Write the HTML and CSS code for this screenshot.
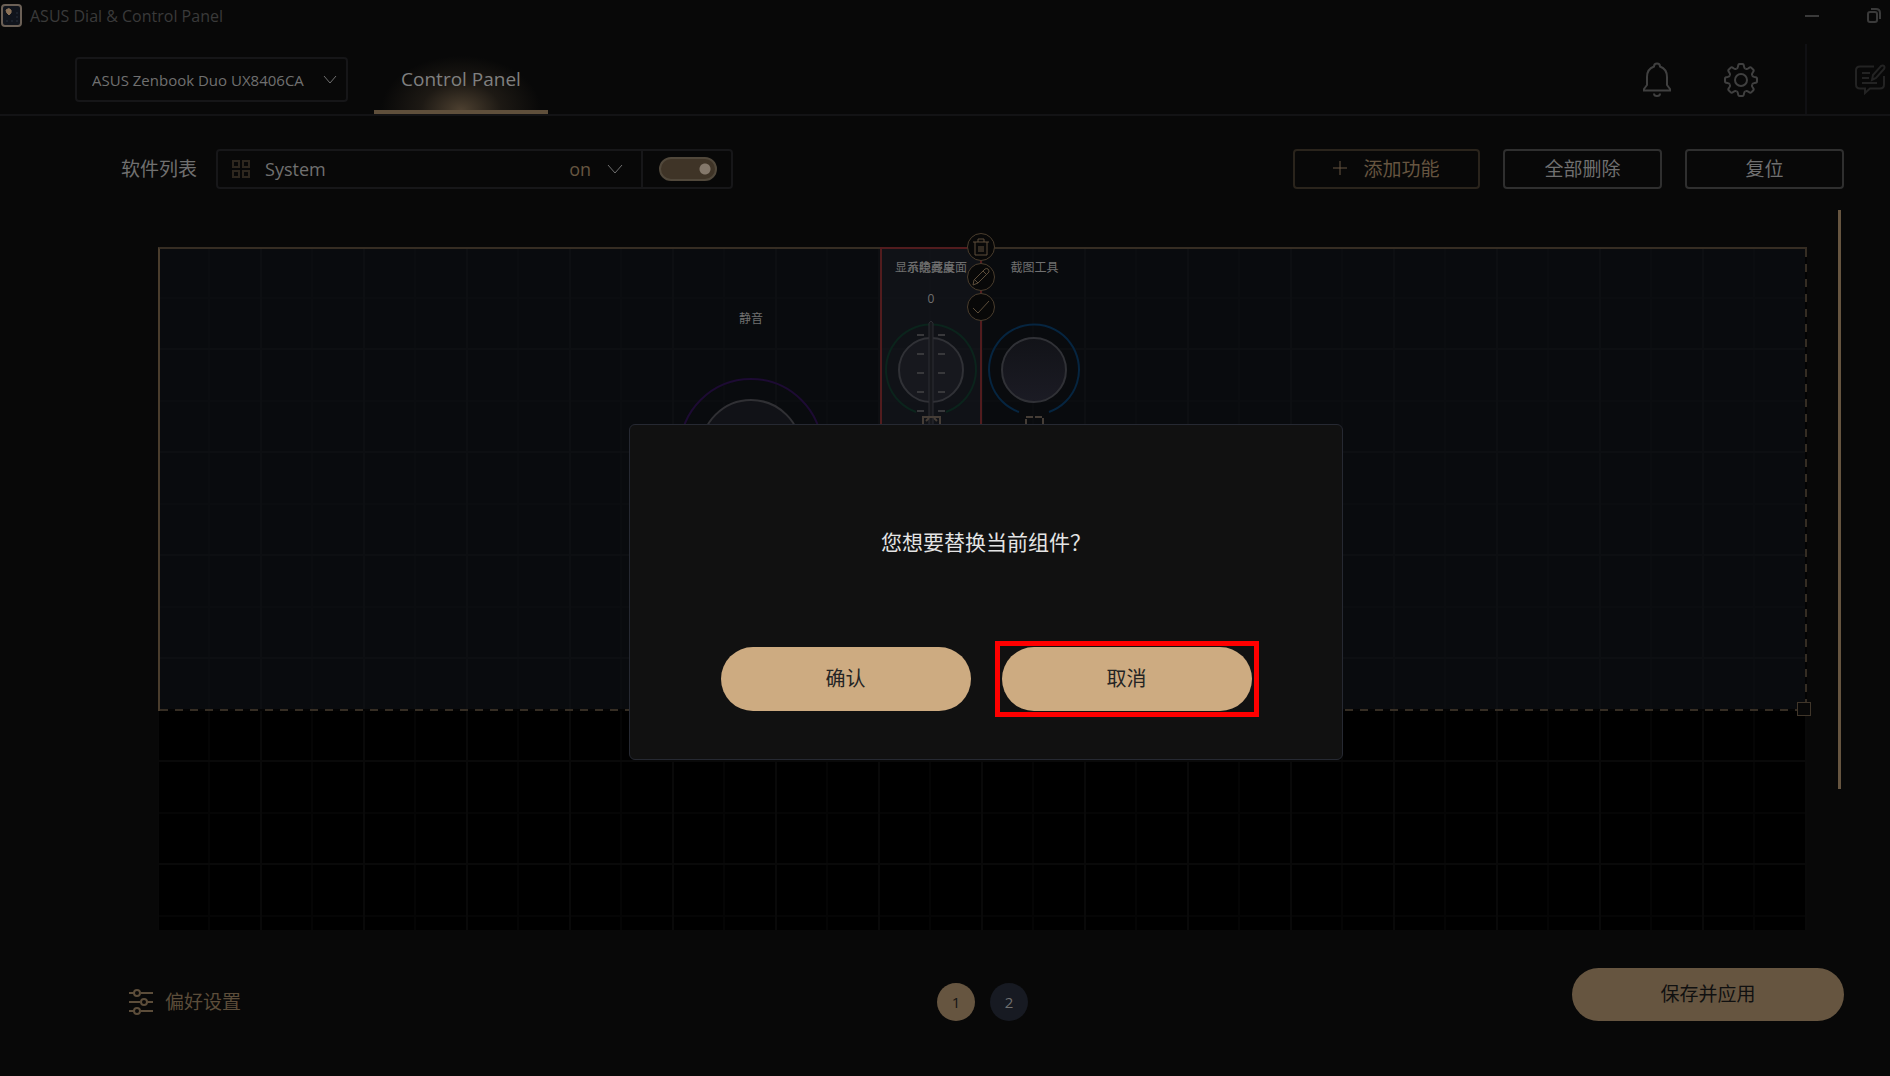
FILE: index.html
```html
<!DOCTYPE html>
<html lang="zh-CN">
<head>
  <meta charset="UTF-8">
  <meta name="viewport" content="width=device-width, initial-scale=1.0">
  <title>ASUS Dial &amp; Control Panel</title>
  <link rel="stylesheet" href="styles.css">
</head>
<body>
  <div class="app">

    <div class="titlebar">
      <svg class="app-icon" width="22" height="24" viewBox="0 0 22 24">
        <rect x="1" y="1" width="19" height="21" rx="3" fill="#10141c" stroke="#6b6056" stroke-width="2"/>
        <path d="M5 6q3-3 5 0 1 3-2 5-3-2-3-5z" fill="#8a7157" stroke="#8a7157"/>
        <path d="M5 17h2M10 17h2M15 17h2M15 9h2M15 13h2" stroke="#1b212b" stroke-width="2"/>
      </svg>
      <span class="app-name">ASUS Dial &amp; Control Panel</span>
      <button class="win-btn" aria-label="Minimize">
        <svg width="16" height="16" viewBox="0 0 16 16"><path d="M1 8h14"/></svg>
      </button>
      <button class="win-btn" aria-label="Restore">
        <svg width="16" height="16" viewBox="0 0 16 16"><rect x="2" y="4" width="9" height="10" rx="2"/><path d="M5 1h5q4 0 4 4v6"/></svg>
      </button>
    </div>

    <header class="header">
      <label class="device">
        <select aria-label="Device">
          <option>ASUS Zenbook Duo UX8406CA</option>
        </select>
        <svg width="14" height="10" viewBox="0 0 14 10"><path d="M1 1l6 7 6-7"/></svg>
      </label>
      <a class="tab" href="#">Control Panel</a>
      <nav class="header-icons">
        <button class="icon-btn" aria-label="Notifications">
          <svg width="36" height="36" viewBox="0 0 36 36">
            <path d="M8 23V15q0-8 7-10.500q0-3 3-3t3 3q7 2.500 7 10.500v8l3 4v1.500H5V27z"/>
            <path d="M15 31.500q0 2.500 3 2.500t3-2.500"/>
          </svg>
        </button>
        <button class="icon-btn" aria-label="Settings">
          <svg width="36" height="36" viewBox="-18 -18 36 36">
            <defs><path id="tooth" d="M-4.600-11.100Q-3.200-11.700-3-13.500Q-2.800-16-1.500-16H1.500Q2.800-16 3-13.500Q3.200-11.700 4.600-11.100"/></defs>
            <use href="#tooth"/>
            <use href="#tooth" transform="rotate(45)"/>
            <use href="#tooth" transform="rotate(90)"/>
            <use href="#tooth" transform="rotate(135)"/>
            <use href="#tooth" transform="rotate(180)"/>
            <use href="#tooth" transform="rotate(225)"/>
            <use href="#tooth" transform="rotate(270)"/>
            <use href="#tooth" transform="rotate(315)"/>
            <circle r="6"/>
          </svg>
        </button>
      </nav>
      <div class="feedback">
        <button class="icon-btn dim" aria-label="Feedback">
          <svg width="32" height="36" viewBox="0 -2 32 36">
            <path d="M20 3.500H6q-4 0-4 4v14q0 4 4 4h5v4.500l5-4.500h10q4 0 4-4V13"/>
            <path d="M8 10h8M8 15h7M8 20h15M18 17l1-5 8-9q2-1 3 0t0 3l-8 9z"/>
          </svg>
        </button>
      </div>
    </header>

    <div class="toolbar">
      <label class="list-label" for="software">软件列表</label>
      <div class="software">
        <svg class="grid-icon" width="20" height="20" viewBox="0 0 20 20"><path d="M2 2h6v6H2zM12 2h6v6h-6zM2 12h6v6H2zM12 12h6v6h-6z"/></svg>
        <select id="software">
          <option>System</option>
        </select>
        <span class="state">on</span>
        <svg class="chevron" width="16" height="10" viewBox="0 0 16 10"><path d="M1 1l7 8 7-8"/></svg>
      </div>
      <div class="toggle-box">
        <input class="toggle" type="checkbox" aria-label="on" checked>
      </div>
      <div class="actions">
        <button class="btn gold">
          <svg width="14" height="14" viewBox="0 0 14 14"><path d="M7 0v14M0 7h14"/></svg>
          添加功能
        </button>
        <button class="btn">全部删除</button>
        <button class="btn">复位</button>
      </div>
    </div>

    <main class="main">
      <div class="canvas">
        <div class="zone">
          <span class="edge-right"></span>
          <span class="edge-bottom"></span>
          <span class="handle"></span>
        </div>

        <section class="widget mute">
          <span class="label">静音</span>
          <svg width="206" height="150" viewBox="0 0 206 150">
            <circle cx="103" cy="75" r="71" fill="none" stroke="#1d0b33" stroke-width="2"/>
            <circle cx="103" cy="75" r="50" fill="#111217" stroke="#303034" stroke-width="2"/>
          </svg>
        </section>

        <section class="widget selected">
          <span class="label">显示隐藏桌面</span>
          <span class="label over">系统亮度</span>
          <span class="value">0</span>
          <svg width="100" height="118" viewBox="0 0 100 118">
            <path d="M35 95A45 45 0 1 1 65 95" fill="none" stroke="#0b241c" stroke-width="2"/>
            <circle cx="50" cy="53" r="32" fill="#17181e" stroke="#303136" stroke-width="2"/>
            <path d="M36 18h7M57 18h7M36 37h7M57 37h7M36 56h7M57 56h7M36 75h7M57 75h7M36 94h7M57 94h7" stroke="#38383b" stroke-width="2"/>
            <path d="M48 118V6l2-2 2 2v112" fill="#17181c" stroke="#2c2d32"/>
            <path d="M42 118v-18h17v18M45 104l3-3M56 104l-3-3" fill="none" stroke="#453d36" stroke-width="2"/>
          </svg>
        </section>

        <section class="widget snip">
          <span class="label">截图工具</span>
          <svg width="103" height="118" viewBox="0 0 103 118">
            <defs>
              <linearGradient id="knob" x1="0" y1="0" x2="0" y2="1">
                <stop offset="0" stop-color="#121318"/>
                <stop offset="1" stop-color="#1b1b24"/>
              </linearGradient>
            </defs>
            <path d="M36 95A45 45 0 1 1 66 95" fill="none" stroke="#062540" stroke-width="2"/>
            <circle cx="51" cy="53" r="32" fill="url(#knob)" stroke="#303136" stroke-width="2"/>
            <path d="M43 118v-18h17v18" fill="none" stroke="#453d36" stroke-width="2" stroke-dasharray="7 2"/>
          </svg>
        </section>

        <div class="widget-tools">
          <button aria-label="删除">
            <svg width="20" height="20" viewBox="0 0 20 20"><path d="M2 5h16M7 5V2h6v3M4 5v13h12V5M8 9v6M10 9v6M12 9v6"/></svg>
          </button>
          <button aria-label="编辑">
            <svg width="20" height="20" viewBox="0 0 20 20"><path d="M2 18l1-5L14 2q2-1 3 0t1 3L7 16zM4 13l3 3M12 4l4 4"/></svg>
          </button>
          <button aria-label="完成">
            <svg width="20" height="20" viewBox="0 0 20 20"><path d="M2 11l5 5L18 4"/></svg>
          </button>
        </div>
      </div>
      <div class="scrollbar"></div>
    </main>

    <footer class="footer">
      <button class="prefs">
        <svg width="24" height="28" viewBox="0 0 24 28">
          <path d="M0 5h5M12 5h12M0 14h11M18 14h6M0 23h5M12 23h12"/>
          <circle cx="8" cy="5" r="3"/><circle cx="15" cy="14" r="3"/><circle cx="8" cy="23" r="3"/>
        </svg>
        <span>偏好设置</span>
      </button>
      <div class="pager">
        <button class="page active">1</button>
        <button class="page">2</button>
      </div>
      <button class="save">保存并应用</button>
    </footer>
  </div>

  <div class="overlay">
    <div class="dialog" role="dialog" aria-modal="true" aria-labelledby="question">
      <p id="question">您想要替换当前组件？</p>
      <div class="dialog-buttons">
        <button class="pill">确认</button>
        <button class="pill marked">取消</button>
      </div>
    </div>
  </div>
</body>
</html>
```
FILE: styles.css
```css
* {
  box-sizing: border-box;
}
body {
  margin: 0;
  background-color: #080808;
  color: #707070;
  font-family: "Open Sans", "Noto Sans CJK SC", sans-serif;
  font-size: 19px;
}
button, select {
  font: inherit;
  color: inherit;
  background: none;
  border: none;
  padding: 0;
}
svg {
  display: block;
  flex: none;
  fill: none;
  stroke: currentColor;
}
select {
  appearance: none;
  outline: none;
}
.app {
  display: flex;
  flex-direction: column;
  min-height: 100vh;
  overflow: hidden;
}

/* title bar */
.titlebar {
  display: flex;
  align-items: center;
  height: 32px;
  padding: 0 8px 0 1px;
  color: #3a3a3a;
  font-size: 16px;
}
.app-icon {
  margin-right: 7px;
}
.app-name {
  flex: 1;
}
.win-btn {
  margin-left: 46px;
  stroke-width: 2;
}

/* header */
.header {
  display: flex;
  height: 84px;
  padding-left: 75px;
  border-bottom: 2px solid #131315;
}
.device {
  display: flex;
  align-items: center;
  width: 273px;
  height: 45px;
  margin-top: 25px;
  padding: 0 9px 0 15px;
  border: 2px solid #161618;
  border-radius: 4px;
  font-size: 15px;
}
.device select {
  flex: 1;
  min-width: 0;
}
.tab {
  width: 174px;
  margin-left: 26px;
  padding-top: 33px;
  border-bottom: 4px solid #5f4f3b;
  background: radial-gradient(ellipse 80px 54px at 50% 100%, #4d4030, #1d1914 50%, transparent);
  color: #808080;
  line-height: 28px;
  text-align: center;
  text-decoration: none;
}
.header-icons {
  display: flex;
  gap: 48px;
  margin-left: auto;
  padding: 30px 46px 0 0;
}
.icon-btn {
  height: 36px;
  color: #404040;
  stroke-width: 2;
}
.icon-btn.dim {
  color: #232323;
}
.feedback {
  display: flex;
  align-items: center;
  margin-top: 12px;
  padding: 0 4px 0 47px;
  border-left: 2px solid #101013;
}

/* toolbar */
.toolbar {
  display: flex;
  align-items: center;
  height: 40px;
  margin-top: 33px;
  padding: 0 46px 0 121px;
}
.list-label {
  margin-right: 19px;
  padding-bottom: 3px;
}
.software {
  display: flex;
  align-items: center;
  width: 427px;
  height: 40px;
  padding: 0 18px 0 13px;
  border: 2px solid #171719;
  border-radius: 4px 0 0 4px;
  font-size: 18px;
}
.grid-icon {
  color: #2e271e;
  stroke-width: 2;
}
.software select {
  flex: 1;
  margin-left: 14px;
}
.state {
  margin-right: 16px;
  color: #665540;
}
.toggle-box {
  display: flex;
  align-items: center;
  width: 90px;
  height: 40px;
  padding-left: 16px;
  border: 2px solid #171719;
  border-left: none;
  border-radius: 0 4px 4px 0;
}
.toggle {
  appearance: none;
  width: 58px;
  height: 24px;
  margin: 0;
  border: 2px solid #51483b;
  border-radius: 12px;
  background: radial-gradient(circle at 44px 10px, #84786b 5px, #3f3427 6px);
}
.actions {
  display: flex;
  gap: 23px;
  margin-left: auto;
}
.btn {
  display: flex;
  align-items: center;
  justify-content: center;
  gap: 16px;
  width: 159px;
  height: 40px;
  padding-bottom: 3px;
  border: 2px solid #2f2f2f;
  border-radius: 4px;
}
.btn.gold {
  width: 187px;
  border-color: #2a241c;
  color: #665540;
}

/* canvas */
.main {
  display: flex;
  flex: 1;
  gap: 31px;
  padding: 21px 49px 0 158px;
}
.canvas {
  position: relative;
  flex: 1;
  margin-top: 37px;
  background-color: #000;
  background-image:
    linear-gradient(90deg, #090909 2px, transparent 2px),
    linear-gradient(#090909 2px, transparent 2px),
    linear-gradient(90deg, #050505 2px, transparent 2px),
    linear-gradient(#050505 2px, transparent 2px);
  background-size: 103px 103px;
  background-position: -1px 0, 0 -2px, 50px 0, 0 50px;
}
.zone {
  position: absolute;
  inset: 0 0 auto;
  height: 464px;
  border-top: 2px solid #362d23;
  border-left: 2px solid #4a3d2d;
  background-color: #090b0e;
  background-image:
    linear-gradient(90deg, #0d0f12 2px, transparent 2px),
    linear-gradient(#0d0f12 2px, transparent 2px),
    linear-gradient(90deg, #0b0d10 2px, transparent 2px),
    linear-gradient(#0b0d10 2px, transparent 2px);
  background-size: 103px 103px;
  background-position: -3px 0, 0 -4px, 48px 0, 0 48px;
}
.edge-right, .edge-bottom {
  position: absolute;
  right: 0;
  bottom: 0;
}
.edge-right {
  top: 0;
  width: 2px;
  background: repeating-linear-gradient(#352d23 0 8px, #030303 8px 15px);
}
.edge-bottom {
  left: 0;
  height: 2px;
  background: repeating-linear-gradient(90deg, #352d23 0 8px, #030303 8px 15px);
}
.handle {
  position: absolute;
  right: -4px;
  bottom: -5px;
  width: 14px;
  height: 14px;
  border: 1px solid #40362a;
  background-color: #080808;
}
.widget {
  position: absolute;
  display: flex;
  flex-direction: column;
  align-items: center;
  font-size: 12px;
  line-height: 16px;
}
.mute {
  left: 490px;
  top: 64px;
  width: 206px;
}
.mute svg {
  margin-top: 48px;
}
.selected {
  left: 722px;
  top: 0;
  width: 102px;
  height: 206px;
  padding-top: 11px;
  border: 2px solid #521c1e;
  background-color: rgba(24, 25, 31, 0.5);
}
.selected .over {
  position: absolute;
  top: 11px;
}
.value {
  margin-top: 15px;
}
.selected svg {
  margin-top: 10px;
}
.snip {
  left: 825px;
  top: 13px;
  width: 103px;
}
.snip svg {
  margin-top: 41px;
}
.widget-tools {
  position: absolute;
  left: 809px;
  top: -14px;
  display: grid;
  gap: 2px;
}
.widget-tools button {
  display: grid;
  place-items: center;
  width: 28px;
  height: 28px;
  border: 1px solid #4a3d2d;
  border-radius: 50%;
  background-color: #080808;
  color: #5c4d3a;
}
.scrollbar {
  width: 3px;
  height: 579px;
  background-color: #665540;
}

/* footer */
.footer {
  display: grid;
  grid-template-columns: 1fr auto 1fr;
  align-items: end;
  margin-top: 38px;
  padding: 0 46px 55px 121px;
}
.prefs {
  display: flex;
  align-items: center;
  justify-self: start;
  gap: 12px;
  height: 38px;
  padding-left: 8px;
  color: #5c4d3a;
}
.prefs svg {
  stroke-width: 2;
}
.prefs span {
  padding-bottom: 3px;
}
.pager {
  display: flex;
  gap: 15px;
}
.page {
  width: 38px;
  height: 38px;
  border-radius: 50%;
  background-color: #171a22;
  font-size: 15px;
}
.page.active {
  background-color: #665540;
  color: #141414;
}
.save {
  justify-self: end;
  width: 272px;
  height: 53px;
  padding-bottom: 3px;
  border-radius: 27px;
  background-color: #665540;
  color: #101010;
}

/* confirm dialog */
.overlay {
  position: fixed;
  inset: 0;
  display: grid;
  place-items: center;
  padding: 108px 0 0 82px;
  font-family: "Noto Sans CJK SC", sans-serif;
}
.dialog {
  display: flex;
  flex-direction: column;
  align-items: center;
  width: 714px;
  padding: 100px 0 48px;
  border: 1px solid #262932;
  border-radius: 6px;
  background-color: #111;
}
.dialog p {
  margin: 0;
  color: #e4e4e4;
  font-size: 21px;
  line-height: 32px;
}
.dialog-buttons {
  display: flex;
  gap: 31px;
  margin-top: 90px;
}
.pill {
  width: 250px;
  height: 64px;
  padding-bottom: 3px;
  border-radius: 32px;
  background-color: #cdab81;
  color: #242424;
  font-size: 20px;
}
.marked {
  position: relative;
}
.marked::after {
  content: "";
  position: absolute;
  inset: -6px -7px;
  border: 5px solid #f00;
}
```
